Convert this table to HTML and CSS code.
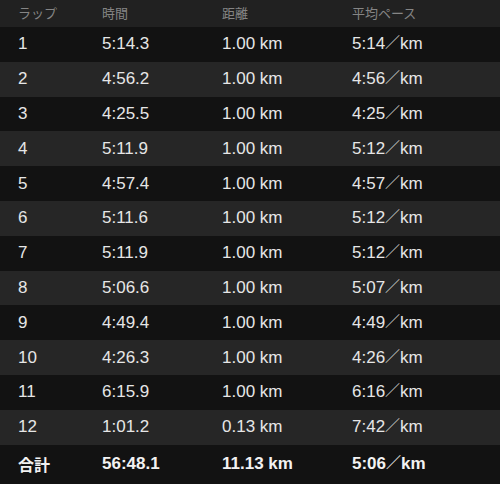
FILE: index.html
```html
<!DOCTYPE html>
<html lang="ja">
<head>
<meta charset="utf-8">
<link rel="stylesheet" href="styles.css">
</head>
<body>
<div class="table">
  <div class="row head"><span>ラップ</span><span>時間</span><span>距離</span><span>平均ペース</span></div>
  <div class="row dark"><span>1</span><span>5:14.3</span><span>1.00 km</span><span>5:14<i>／</i>km</span></div>
  <div class="row light"><span>2</span><span>4:56.2</span><span>1.00 km</span><span>4:56<i>／</i>km</span></div>
  <div class="row dark"><span>3</span><span>4:25.5</span><span>1.00 km</span><span>4:25<i>／</i>km</span></div>
  <div class="row light"><span>4</span><span>5:11.9</span><span>1.00 km</span><span>5:12<i>／</i>km</span></div>
  <div class="row dark"><span>5</span><span>4:57.4</span><span>1.00 km</span><span>4:57<i>／</i>km</span></div>
  <div class="row light"><span>6</span><span>5:11.6</span><span>1.00 km</span><span>5:12<i>／</i>km</span></div>
  <div class="row dark"><span>7</span><span>5:11.9</span><span>1.00 km</span><span>5:12<i>／</i>km</span></div>
  <div class="row light"><span>8</span><span>5:06.6</span><span>1.00 km</span><span>5:07<i>／</i>km</span></div>
  <div class="row dark"><span>9</span><span>4:49.4</span><span>1.00 km</span><span>4:49<i>／</i>km</span></div>
  <div class="row light"><span>10</span><span>4:26.3</span><span>1.00 km</span><span>4:26<i>／</i>km</span></div>
  <div class="row dark"><span>11</span><span>6:15.9</span><span>1.00 km</span><span>6:16<i>／</i>km</span></div>
  <div class="row light"><span>12</span><span>1:01.2</span><span>0.13 km</span><span>7:42<i>／</i>km</span></div>
  <div class="row total"><span>合計</span><span>56:48.1</span><span>11.13 km</span><span>5:06<i>／</i>km</span></div>
</div>
</body>
</html>
```
FILE: styles.css
```css
html, body {
  margin: 0;
  padding: 0;
  background: #121212;
}
.table {
  width: 500px;
  height: 484px;
  display: flex;
  flex-direction: column;
  font-family: "Liberation Sans", "Noto Sans CJK JP", sans-serif;
  color: #e6e6e6;
}
.row {
  display: grid;
  grid-template-columns: 84px 120px 130px 1fr;
  padding-left: 18px;
  align-items: center;
  font-size: 17px;
  line-height: 20px;
  height: 34.8px;
}
.row i {
  font-style: normal;
  font-family: "Noto Sans CJK JP", sans-serif;
  font-size: 15px;
  line-height: 1;
  vertical-align: 1px;
  color: #d0d0d0;
}
.head {
  height: 27px;
  background: #212121;
  color: #858585;
  font-size: 13px;
  font-family: "Noto Sans CJK JP", sans-serif;
  padding-bottom: 2px;
  box-sizing: border-box;
}
.dark {
  background: #121212;
}
.light {
  background: #262626;
}
.total {
  flex: 1;
  background: #121212;
  font-weight: bold;
  color: #f2f2f2;
}
.total span:first-child {
  font-family: "Noto Sans CJK JP", sans-serif;
  font-size: 16px;
  line-height: 20px;
}
.total i {
  color: #f2f2f2;
}
```
